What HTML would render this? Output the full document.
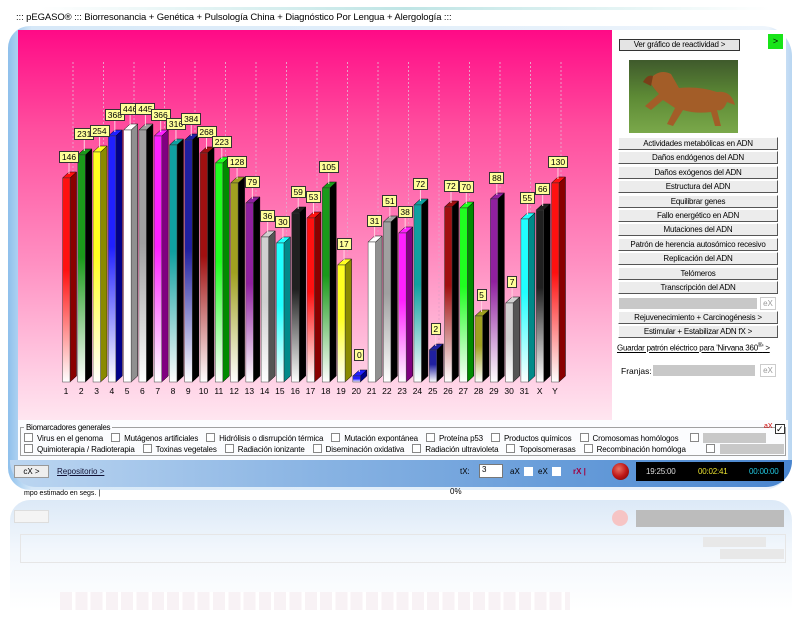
<!DOCTYPE html>
<html><head><meta charset="utf-8">
<style>
*{margin:0;padding:0;box-sizing:border-box}
body{width:799px;height:617px;overflow:hidden;background:#fff;font-family:"Liberation Sans",sans-serif;font-size:9px;color:#000;position:relative}
.abs{position:absolute}
.frame{left:8px;top:26px;width:784px;height:464px;border-radius:22px 30px 30px 22px;background:linear-gradient(90deg,#8ec0ec,#d6e8f8 3%,#eef5fc 97%,#b9d6f2)}
.topline{left:40px;top:7px;width:730px;height:3px;background:linear-gradient(90deg,#fff,#bfe5e5,#fff)}
.title{left:16px;top:12px;font-size:9.5px;letter-spacing:-0.1px;color:#000;white-space:nowrap}
.chart{left:18px;top:30px;width:594px;height:390px;background:linear-gradient(180deg,#ff0a86 0%,#ff4d9e 25%,#ff90c2 60%,#ffd2e6 90%,#ffe6f0 100%)}
.panel{left:612px;top:30px;width:174px;height:390px;background:#fff}
.btn{position:absolute;left:618px;width:160px;height:13px;background:#ececec;border:1px solid #fff;border-right:1px solid #555;border-bottom:1px solid #555;text-align:center;font-size:8px;letter-spacing:-0.2px;line-height:11px;white-space:nowrap;overflow:hidden}
.bio{left:18px;top:420px;width:770px;height:40px;background:#fbfcfe}
.fs{left:20px;top:427px;width:766px;height:29px;border:1px solid #a0a0a0}
.cb{display:inline-block;width:9px;height:9px;border:1px solid #888;background:#fff;vertical-align:-1px;margin:0 4px 0 0}
.row{position:absolute;left:24px;white-space:nowrap;font-size:8px;letter-spacing:-0.15px}
.row span{margin-right:8px}
.bar{left:10px;top:460px;width:782px;height:27px;border-radius:0 0 26px 26px;background:linear-gradient(90deg,#bcd6f1,#88b3e3 40%,#5d95d6 80%,#4a86cf)}
.lbl{position:absolute;background:#ffff99;border:1px solid #333;font-size:8.5px;line-height:10px;height:12px;padding:0 1px;text-align:center}
</style></head><body>
<div class="abs topline"></div>
<div class="abs title">::: pEGASO® ::: Biorresonancia + Genética + Pulsología China + Diagnóstico Por Lengua + Alergología :::</div>
<div class="abs frame"></div>
<div class="abs chart" id="chart"></div>
<div class="abs panel"></div>
<div class="btn" style="left:619px;top:39px;width:121px;height:12px;border:1px solid #333;background:#e4e4e4;line-height:10px">Ver gráfico de reactividad &gt;</div>
<div class="abs" style="left:768px;top:34px;width:15px;height:15px;background:#18e418;font-size:9px;text-align:center;line-height:14px">&gt;</div>
<svg class="abs" style="left:629px;top:60px" width="109" height="73" viewBox="0 0 109 73">
<defs><linearGradient id="g" x1="0" y1="0" x2="0" y2="1"><stop offset="0" stop-color="#3f5a2c"/><stop offset=".5" stop-color="#5d8a35"/><stop offset="1" stop-color="#7aa84a"/></linearGradient></defs>
<rect width="109" height="73" fill="url(#g)"/>
<path d="M20 20 Q30 8 42 14 L50 28 Q70 26 88 32 Q102 30 106 45 L98 42 Q94 52 88 50 L92 66 L86 66 L82 52 Q66 54 54 50 L44 66 L38 64 L46 48 Q40 44 34 40 L22 50 L16 46 L30 34 Q24 28 20 20Z" fill="#a35d28"/>
<path d="M14 22 Q18 14 24 16 L22 26Z" fill="#7a3f18"/>
</svg>
<div id="btns"></div>
<div class="abs" style="left:619px;top:298px;width:138px;height:11px;background:#c8c8c8"></div>
<div class="abs" style="left:760px;top:297px;width:16px;height:13px;border:1px solid #ccc;color:#999;font-size:8px;text-align:center;line-height:11px">eX</div>
<div class="abs" style="left:617px;top:343px;font-size:8px;letter-spacing:-0.25px;text-decoration:underline;white-space:nowrap">Guardar patrón eléctrico para 'Nirvana 360<sup style="font-size:6px">®</sup>' &gt;</div>
<div class="abs" style="left:621px;top:366px;font-size:8.5px">Franjas:</div>
<div class="abs" style="left:653px;top:365px;width:102px;height:11px;background:#c8c8c8"></div>
<div class="abs" style="left:760px;top:364px;width:16px;height:13px;border:1px solid #ccc;color:#999;font-size:8px;text-align:center;line-height:11px">eX</div>

<div class="abs bio"></div>
<div class="abs fs"></div>
<div class="abs" style="left:24px;top:423px;background:#fbfcfe;padding:0 2px;font-size:8px;letter-spacing:-0.3px">Biomarcadores generales</div>
<div class="abs" style="left:764px;top:423px;font-size:7px;color:#c00">aX</div>
<div class="abs" style="left:775px;top:424px;width:10px;height:10px;border:1px solid #333;background:#fff;font-size:9px;line-height:8px">✓</div>
<div class="row" style="top:433px"><span><i class="cb"></i>Virus en el genoma</span><span><i class="cb"></i>Mutágenos artificiales</span><span><i class="cb"></i>Hidrólisis o disrrupción térmica</span><span><i class="cb"></i>Mutación expontánea</span><span><i class="cb"></i>Proteína p53</span><span><i class="cb"></i>Productos químicos</span><span><i class="cb"></i>Cromosomas homólogos</span></div>
<div class="abs" style="left:690px;top:433px;width:9px;height:9px;border:1px solid #888;background:#fff"></div>
<div class="abs" style="left:703px;top:433px;width:63px;height:10px;background:#c8c8c8"></div>
<div class="row" style="top:444px"><span><i class="cb"></i>Quimioterapia / Radioterapia</span><span><i class="cb"></i>Toxinas vegetales</span><span><i class="cb"></i>Radiación ionizante</span><span><i class="cb"></i>Diseminación oxidativa</span><span><i class="cb"></i>Radiación ultravioleta</span><span><i class="cb"></i>Topoisomerasas</span><span><i class="cb"></i>Recombinación homóloga</span></div>
<div class="abs" style="left:706px;top:444px;width:9px;height:9px;border:1px solid #888;background:#fff"></div>
<div class="abs" style="left:720px;top:444px;width:64px;height:10px;background:#c8c8c8"></div>

<div class="abs bar"></div>
<div class="abs" style="left:14px;top:465px;width:35px;height:13px;background:#eee;border:1px solid #999;text-align:center;font-size:8px;line-height:11px">cX &gt;</div>
<div class="abs" style="left:57px;top:467px;font-size:8px;text-decoration:underline;color:#113">Repositorio &gt;</div>
<div class="abs" style="left:460px;top:467px;font-size:8px">tX:</div>
<div class="abs" style="left:479px;top:464px;width:24px;height:14px;background:#fff;border:1px solid #777;font-size:8px;padding-left:2px">3</div>
<div class="abs" style="left:510px;top:467px;font-size:8px">aX</div>
<div class="abs" style="left:524px;top:467px;width:9px;height:9px;background:#fff"></div>
<div class="abs" style="left:538px;top:467px;font-size:8px">eX</div>
<div class="abs" style="left:552px;top:467px;width:9px;height:9px;background:#fff"></div>
<div class="abs" style="left:573px;top:467px;font-size:8px;color:#a00040;font-weight:bold">rX |</div>
<div class="abs" style="left:612px;top:463px;width:17px;height:17px;border-radius:50%;background:radial-gradient(circle at 40% 35%,#e87060,#c01818 50%,#600 100%)"></div>
<div class="abs" style="left:636px;top:462px;width:148px;height:19px;background:#000;font-size:8px;letter-spacing:-0.2px;line-height:19px;white-space:nowrap"><span style="color:#ddd;position:absolute;left:10px">19:25:00</span><span style="color:#e8e030;position:absolute;left:62px">00:02:41</span><span style="color:#20c8e0;position:absolute;left:113px">00:00:00</span></div>
<div class="abs" style="left:24px;top:490px;font-size:7px">mpo estimado en segs. |</div>
<div class="abs" style="left:450px;top:487px;font-size:8px">0%</div>

<div class="abs" style="left:10px;top:500px;width:782px;height:110px;border-radius:20px 20px 0 0;background:linear-gradient(180deg,#dce9f7,#f2f7fc 45%,#fff)"></div>
<div class="abs" style="left:14px;top:510px;width:35px;height:13px;background:#f4f4f4;border:1px solid #ddd"></div>
<div class="abs" style="left:636px;top:510px;width:148px;height:17px;background:#bcbcbc"></div>
<div class="abs" style="left:612px;top:510px;width:16px;height:16px;border-radius:50%;background:#f6c4c4"></div>
<div class="abs" style="left:20px;top:534px;width:766px;height:29px;border:1px solid #e6e6e6"></div>
<div class="abs" style="left:703px;top:537px;width:63px;height:10px;background:#e8e8e8"></div>
<div class="abs" style="left:720px;top:549px;width:64px;height:10px;background:#e8e8e8"></div>
<div class="abs" style="left:60px;top:592px;width:510px;height:18px;background:repeating-linear-gradient(90deg,#f8f2f5 0 12px,#fff 12px 15.3px)"></div>

<script>
var vals=[146,231,254,368,446,445,366,316,384,268,223,128,79,36,30,59,53,105,17,0,31,51,38,72,2,72,70,5,88,7,55,66,130];
var tops=[178,155,152,136,130,130,136,145,140,153,163,183,203,237,243,213,218,188,265,378,242,222,233,205,350,207,208,316,199,303,219,210,183];
var cols=[["#ff1010","#8a0000"],["#1a9a1a","#000"],["#ffff20","#8a8a00"],["#2020ff","#00008a"],["#ffffff","#909090"],["#a0a0a0","#000"],["#ff20ff","#800080"],["#10a0a0","#000"],["#2020a0","#000"],["#a01010","#000"],["#20ff20","#008a00"],["#a0a020","#000"],["#9020a0","#000"],["#d0d0d0","#555"],["#20ffff","#008a8a"],["#202020","#000"],["#ff1010","#8a0000"],["#1a9a1a","#000"],["#ffff20","#8a8a00"],["#2020ff","#00008a"],["#ffffff","#909090"],["#a0a0a0","#000"],["#ff20ff","#800080"],["#10a0a0","#000"],["#2020a0","#000"],["#a01010","#000"],["#20ff20","#008a00"],["#a0a020","#000"],["#9020a0","#000"],["#d0d0d0","#555"],["#20ffff","#008a8a"],["#202020","#000"],["#ff1010","#8a0000"]];
var names=[];for(var i=1;i<=31;i++)names.push(""+i);names.push("X","Y");
var s='<svg style="position:absolute;left:0;top:0;z-index:2" width="799" height="617" xmlns="http://www.w3.org/2000/svg"><defs>';
for(var i=0;i<33;i++){s+='<linearGradient id="f'+i+'" x1="0" y1="0" x2="0" y2="1"><stop offset="0" stop-color="'+cols[i][0]+'"/><stop offset=".45" stop-color="'+cols[i][0]+'"/><stop offset="1" stop-color="#fff"/></linearGradient>';}
s+='</defs>';
for(var k=0;k<17;k++){var gx=73+k*30.5;s+='<line x1="'+gx+'" y1="62" x2="'+gx+'" y2="380" stroke="#e8a0c8" stroke-dasharray="2,2" stroke-width="1"/>';}
var B=382;
for(var i=0;i<33;i++){
 var cx=66+i*15.28, t=tops[i];
 var fl=cx-3.5, w=7.5, d=6.5, u=6;
 if(i==19){t=376;}
 s+='<polygon points="'+(fl+w)+','+t+' '+(fl+w+d)+','+(t-u)+' '+(fl+w+d)+','+(B-u)+' '+(fl+w)+','+B+'" fill="'+cols[i][1]+'" stroke="#000" stroke-width=".5"/>';
 s+='<polygon points="'+fl+','+t+' '+(fl+d)+','+(t-u)+' '+(fl+w+d)+','+(t-u)+' '+(fl+w)+','+t+'" fill="'+cols[i][0]+'" stroke="#000" stroke-width=".5"/>';
 s+='<rect x="'+fl+'" y="'+t+'" width="'+w+'" height="'+(B-t)+'" fill="url(#f'+i+')" stroke="#444" stroke-width=".5"/>';
 s+='<line x1="'+(cx+3)+'" y1="'+(t-16)+'" x2="'+(cx+3)+'" y2="'+(t-4)+'" stroke="#ffd0e0" stroke-width="1"/>';
 s+='<text x="'+cx+'" y="394" font-size="8.5" font-family="Liberation Sans" text-anchor="middle">'+names[i]+'</text>';
}
s+='</svg>';
document.getElementById('chart').insertAdjacentHTML('afterend',s);
var h='';
for(var i=0;i<33;i++){var cx=66+i*15.28,t=tops[i];if(i==19)t=376;var lw=(""+vals[i]).length*5+5;
h+='<div class="lbl" style="z-index:3;left:'+(cx+3-lw/2)+'px;top:'+(t-27)+'px;width:'+lw+'px">'+vals[i]+'</div>';}
document.body.insertAdjacentHTML('beforeend',h);
var bt=["Actividades metabólicas en ADN","Daños endógenos del ADN","Daños exógenos del ADN","Estructura del ADN","Equilibrar genes","Fallo energético en ADN","Mutaciones del ADN","Patrón de herencia autosómico recesivo","Replicación del ADN","Telómeros","Transcripción del ADN"];
var b='';for(var i=0;i<bt.length;i++){b+='<div class="btn" style="top:'+(137+i*14.4)+'px">'+bt[i]+'</div>';}
b+='<div class="btn" style="top:311px">Rejuvenecimiento + Carcinogénesis &gt;</div><div class="btn" style="top:325px">Estimular + Estabilizar ADN fX &gt;</div>';
document.getElementById('btns').innerHTML=b;
</script>
</body></html>
